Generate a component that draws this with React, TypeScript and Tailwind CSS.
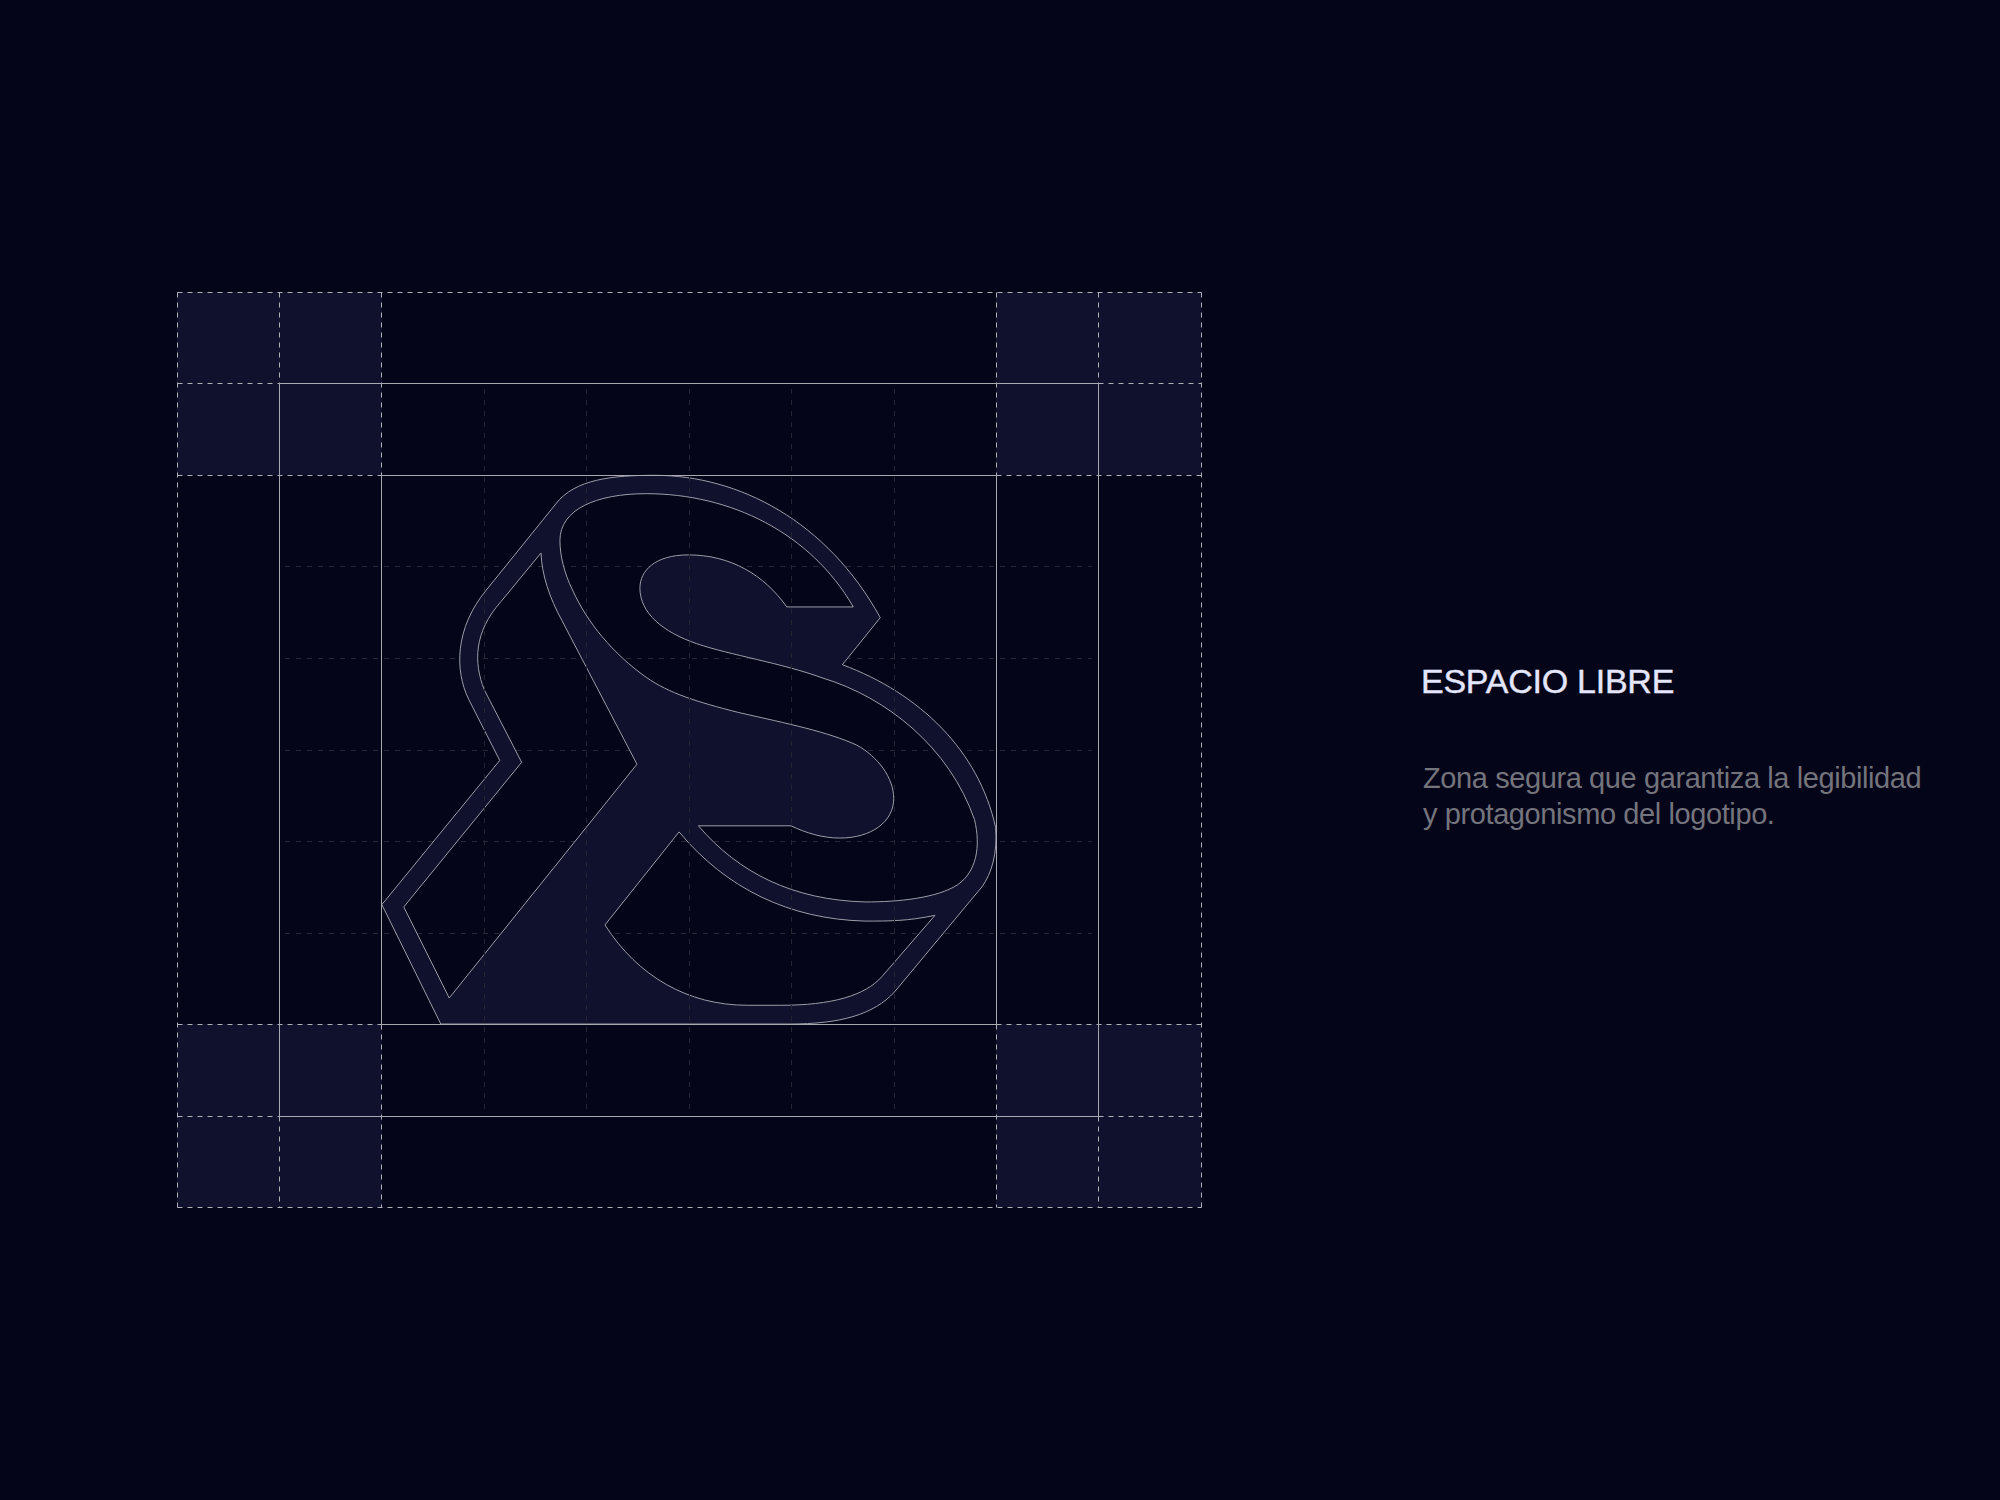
const LOGO_OUTER =
  "M192 1474 L52 1162 L332 785 L258 625 C225 550 225 440 300 340 L465 115 C510 50 600 40 700 40 C900 40 1110 160 1236 412 L1146 535 C1330 610 1470 760 1510 960 C1515 1030 1500 1080 1478 1115 L1270 1390 C1220 1450 1140 1474 1020 1474 Z";
const LOGO_RIBBON =
  "M430 243 L335 370 C270 450 270 530 295 600 L384 790 L104 1168 L212 1406 L658 795 L480 420 C450 360 432 300 430 243 Z";
const LOGO_S =
  "M1172 384 L1014 384 C960 300 880 248 780 248 C700 248 665 290 665 335 C665 400 720 450 800 480 C880 510 1000 530 1100 570 C1250 620 1400 750 1460 940 C1475 1010 1465 1075 1420 1110 C1370 1145 1280 1155 1200 1155 C1030 1150 900 1080 804 956 L1024 956 C1060 975 1100 988 1140 988 C1215 988 1268 945 1268 885 C1268 830 1230 775 1180 745 C1110 710 1020 690 900 660 C800 632 735 610 680 568 C600 505 540 425 505 340 C485 295 475 250 475 210 C475 130 560 88 680 88 C880 88 1070 190 1172 384 Z";
const LOGO_FOOT =
  "M758 972 L582 1215 C660 1350 780 1425 920 1425 L1000 1425 C1120 1425 1200 1400 1240 1350 L1366 1190 C1300 1205 1260 1205 1200 1205 C1020 1200 870 1120 758 972 Z";

const FAINT_X = [484, 586, 689, 791, 894];
const FAINT_Y = [566, 658, 750, 841, 933];

function ConstructionGrid() {
  const corners = [
    [177, 292],
    [996, 292],
    [177, 1024],
    [996, 1024],
  ];
  const dashed = [
    `M177 292H1201`,
    `M177 383H279`,
    `M1098 383H1201`,
    `M177 475H381`,
    `M996 475H1201`,
    `M177 1024H381`,
    `M996 1024H1201`,
    `M177 1116H279`,
    `M1098 1116H1201`,
    `M177 1207H1201`,
    `M177 292V1207`,
    `M279 292V383`,
    `M279 1116V1207`,
    `M381 292V475`,
    `M381 1024V1207`,
    `M996 292V475`,
    `M996 1024V1207`,
    `M1098 292V383`,
    `M1098 1116V1207`,
    `M1201 292V1207`,
  ];
  const solid = [
    `M279 383H1098`,
    `M381 475H996`,
    `M381 1024H996`,
    `M279 1116H1098`,
    `M279 383V1116`,
    `M381 475V1024`,
    `M996 475V1024`,
    `M1098 383V1116`,
  ];

  return (
    <svg
      viewBox="176 291 1026 917"
      width={1026}
      height={917}
      fill="none"
      className="block shrink-0"
    >
      {corners.map(([x, y]) => (
        <rect key={`${x}-${y}`} x={x} y={y} width={205} height={183} fill="#10112c" />
      ))}
      {FAINT_Y.map((y) => (
        <path key={y} d={`M285 ${y + 0.5}H1092`} stroke="#272736" strokeDasharray="5 6" />
      ))}
      <g transform="translate(360 460) scale(0.42092 0.38265)">
        <path
          d={`${LOGO_OUTER} ${LOGO_RIBBON} ${LOGO_S} ${LOGO_FOOT}`}
          fillRule="evenodd"
          fill="#10112c"
          stroke="#9c9ca8"
          strokeWidth={1}
          vectorEffect="non-scaling-stroke"
        />
      </g>
      {FAINT_X.map((x) => (
        <path key={x} d={`M${x + 0.5} 389V1110`} stroke="#242433" strokeDasharray="5 6" />
      ))}
      {dashed.map((d) => (
        <path
          key={d}
          d={d.replace(/(\d+)/g, (n) => `${n}.5`)}
          stroke="#b0b0b8"
          strokeDasharray="5 5"
        />
      ))}
      {solid.map((d) => (
        <path key={d} d={d.replace(/(\d+)/g, (n) => `${n}.5`)} stroke="#a8a8b0" />
      ))}
    </svg>
  );
}

export default function App() {
  return (
    <div className="flex h-[1500px] w-[2000px] bg-[#05051a] pl-[176px] pt-[291px] font-['Liberation_Sans',sans-serif]">
      <ConstructionGrid />
      <div className="ml-[219px] pt-[370px]">
        <h1 className="text-[34px] leading-[40px] font-normal tracking-[-0.25px] text-[#e4e6fb] [-webkit-text-stroke:0.4px_#e4e6fb]">
          ESPACIO LIBRE
        </h1>
        <p className="mt-[59px] ml-[2px] text-[29px] leading-[36px] tracking-[-0.4px] whitespace-nowrap text-[#74747c]">
          Zona segura que garantiza la legibilidad
          <br />
          y protagonismo del logotipo.
        </p>
      </div>
    </div>
  );
}
